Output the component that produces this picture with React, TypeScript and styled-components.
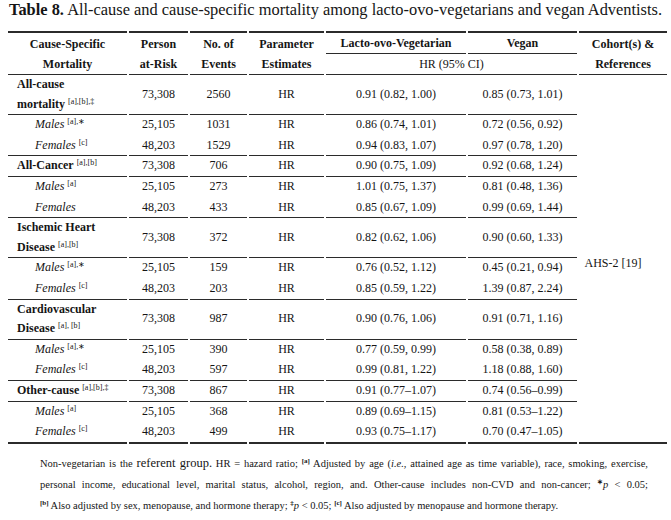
import React from 'react'
import styled, { createGlobalStyle } from 'styled-components'

type Line = 'none' | 'thin' | 'thick'

interface Row {
  label: React.ReactNode
  sup?: string
  atRisk: string
  events: string
  lacto: string
  vegan: string
}

interface Group extends Row {
  subs: Row[]
}

const groups: Group[] = [
  {
    label: <>All-cause<br />mortality</>,
    sup: '[a],[b],‡',
    atRisk: '73,308',
    events: '2560',
    lacto: '0.91 (0.82, 1.00)',
    vegan: '0.85 (0.73, 1.01)',
    subs: [
      { label: 'Males', sup: '[a],∗', atRisk: '25,105', events: '1031', lacto: '0.86 (0.74, 1.01)', vegan: '0.72 (0.56, 0.92)' },
      { label: 'Females', sup: '[c]', atRisk: '48,203', events: '1529', lacto: '0.94 (0.83, 1.07)', vegan: '0.97 (0.78, 1.20)' }
    ]
  },
  {
    label: 'All-Cancer',
    sup: '[a],[b]',
    atRisk: '73,308',
    events: '706',
    lacto: '0.90 (0.75, 1.09)',
    vegan: '0.92 (0.68, 1.24)',
    subs: [
      { label: 'Males', sup: '[a]', atRisk: '25,105', events: '273', lacto: '1.01 (0.75, 1.37)', vegan: '0.81 (0.48, 1.36)' },
      { label: 'Females', atRisk: '48,203', events: '433', lacto: '0.85 (0.67, 1.09)', vegan: '0.99 (0.69, 1.44)' }
    ]
  },
  {
    label: <>Ischemic Heart<br />Disease</>,
    sup: '[a],[b]',
    atRisk: '73,308',
    events: '372',
    lacto: '0.82 (0.62, 1.06)',
    vegan: '0.90 (0.60, 1.33)',
    subs: [
      { label: 'Males', sup: '[a],∗', atRisk: '25,105', events: '159', lacto: '0.76 (0.52, 1.12)', vegan: '0.45 (0.21, 0.94)' },
      { label: 'Females', sup: '[c]', atRisk: '48,203', events: '203', lacto: '0.85 (0.59, 1.22)', vegan: '1.39 (0.87, 2.24)' }
    ]
  },
  {
    label: <>Cardiovascular<br />Disease</>,
    sup: '[a], [b]',
    atRisk: '73,308',
    events: '987',
    lacto: '0.90 (0.76, 1.06)',
    vegan: '0.91 (0.71, 1.16)',
    subs: [
      { label: 'Males', sup: '[a],∗', atRisk: '25,105', events: '390', lacto: '0.77 (0.59, 0.99)', vegan: '0.58 (0.38, 0.89)' },
      { label: 'Females', sup: '[c]', atRisk: '48,203', events: '597', lacto: '0.99 (0.81, 1.22)', vegan: '1.18 (0.88, 1.60)' }
    ]
  },
  {
    label: 'Other-cause',
    sup: '[a],[b],‡',
    atRisk: '73,308',
    events: '867',
    lacto: '0.91 (0.77–1.07)',
    vegan: '0.74 (0.56–0.99)',
    subs: [
      { label: 'Males', sup: '[a]', atRisk: '25,105', events: '368', lacto: '0.89 (0.69–1.15)', vegan: '0.81 (0.53–1.22)' },
      { label: 'Females', sup: '[c]', atRisk: '48,203', events: '499', lacto: '0.93 (0.75–1.17)', vegan: '0.70 (0.47–1.05)' }
    ]
  }
]

const columns = [119, 59, 57, 75, 140, 109, 88]

const ink = '#151515'
const rule = '#2b2b2b'

const lineWidth: Record<Line, string> = {
  none: '1px solid transparent',
  thin: `1px solid ${rule}`,
  thick: `2px solid ${rule}`
}

const GlobalStyle = createGlobalStyle`
  body {
    margin: 0;
    background: #fff;
    color: ${ink};
    font-family: "Liberation Serif", "Times New Roman", serif;
  }
`

const Page = styled.div`
  padding: 0 2px 0 6px;
`

const Title = styled.h1`
  margin: 0 0 11px 3px;
  font-size: 16.4px;
  font-weight: normal;
  line-height: 20px;
  white-space: nowrap;

  b {
    font-weight: bold;
  }
`

const Table = styled.table`
  width: 663px;
  table-layout: fixed;
  border-collapse: separate;
  border-spacing: 2px 0;
  font-size: 12px;
`

const HeadCell = styled.th<{ $top?: boolean; $bold?: boolean }>`
  padding: 0 2px;
  line-height: 20px;
  text-align: center;
  vertical-align: middle;
  font-weight: ${({ $bold = true }) => ($bold ? 'bold' : 'normal')};
  border-top: ${({ $top }) => ($top ? lineWidth.thick : 'none')};
  border-bottom: ${lineWidth.thin};
  white-space: nowrap;
`

const Cell = styled.td<{ $line: Line }>`
  padding: 0 2px;
  line-height: 19.6px;
  text-align: center;
  vertical-align: middle;
  border-bottom: ${({ $line }) => lineWidth[$line]};
  white-space: nowrap;
`

const LabelCell = styled(Cell)<{ $sub?: boolean }>`
  text-align: left;
  padding-left: ${({ $sub }) => ($sub ? '27px' : '9px')};
  font-weight: ${({ $sub }) => ($sub ? 'normal' : 'bold')};
  font-style: ${({ $sub }) => ($sub ? 'italic' : 'normal')};
`

const CohortCell = styled.td`
  text-align: center;
  vertical-align: middle;
  padding: 10px 20px 0 0;
  border-bottom: ${lineWidth.thick};
  white-space: nowrap;
`

const Sup = styled.sup`
  font-size: 8px;
  font-weight: normal;
  font-style: normal;
  vertical-align: 4px;
  line-height: 0;
  margin-left: 3px;
`

const Notes = styled.div`
  width: 608px;
  margin: 9px 0 0 34px;
  font-size: 10.5px;
  line-height: 21px;
`

const NoteLine = styled.div<{ $full?: boolean }>`
  white-space: nowrap;
  text-align: ${({ $full }) => ($full ? 'justify' : 'left')};
  text-align-last: ${({ $full }) => ($full ? 'justify' : 'left')};
`

const Big = styled.span`
  font-size: 12.5px;
`

const NoteSup = styled.sup`
  font-size: 7px;
  font-weight: bold;
  vertical-align: 4px;
  line-height: 0;
`

const BodyRow = ({ row, sub, line, children }: { row: Row; sub?: boolean; line: Line; children?: React.ReactNode }) => (
  <tr>
    <LabelCell $line={line} $sub={sub}>
      {row.label}
      {row.sup && <Sup>{row.sup}</Sup>}
    </LabelCell>
    <Cell $line={line}>{row.atRisk}</Cell>
    <Cell $line={line}>{row.events}</Cell>
    <Cell $line={line}>HR</Cell>
    <Cell $line={line}>{row.lacto}</Cell>
    <Cell $line={line}>{row.vegan}</Cell>
    {children}
  </tr>
)

export default function App() {
  const rowCount = groups.reduce((n, g) => n + 1 + g.subs.length, 0)

  return (
    <Page>
      <GlobalStyle />
      <Title>
        <b>Table 8.</b> All-cause and cause-specific mortality among lacto-ovo-vegetarians and vegan Adventists.
      </Title>

      <Table>
        <colgroup>
          {columns.map((w, i) => (
            <col key={i} style={{ width: w }} />
          ))}
        </colgroup>
        <thead>
          <tr>
            <HeadCell $top rowSpan={2}>Cause-Specific<br />Mortality</HeadCell>
            <HeadCell $top rowSpan={2}>Person<br />at-Risk</HeadCell>
            <HeadCell $top rowSpan={2}>No. of<br />Events</HeadCell>
            <HeadCell $top rowSpan={2}>Parameter<br />Estimates</HeadCell>
            <HeadCell $top>Lacto-ovo-Vegetarian</HeadCell>
            <HeadCell $top>Vegan</HeadCell>
            <HeadCell $top rowSpan={2}>Cohort(s) &amp;<br />References</HeadCell>
          </tr>
          <tr>
            <HeadCell colSpan={2} $bold={false}>HR (95% CI)</HeadCell>
          </tr>
        </thead>
        <tbody>
          {groups.map((g, gi) => {
            const last = gi === groups.length - 1
            return (
              <React.Fragment key={gi}>
                <BodyRow row={g} line="thin">
                  {gi === 0 && <CohortCell rowSpan={rowCount}>AHS-2 [19]</CohortCell>}
                </BodyRow>
                {g.subs.map((s, si) => (
                  <BodyRow
                    key={si}
                    row={s}
                    sub
                    line={si === g.subs.length - 1 ? (last ? 'thick' : 'thin') : 'none'}
                  />
                ))}
              </React.Fragment>
            )
          })}
        </tbody>
      </Table>

      <Notes>
        <NoteLine $full>
          Non-vegetarian is the <Big>referent group.</Big> HR = hazard ratio; <NoteSup>[a]</NoteSup> Adjusted by age (
          <i>i.e.</i>, attained age as time variable), race, smoking, exercise,
        </NoteLine>
        <NoteLine $full>
          personal income, educational level, marital status, alcohol, region, and. Other-cause includes non-CVD and
          non-cancer; <NoteSup>∗</NoteSup><i>p</i> &lt; 0.05;
        </NoteLine>
        <NoteLine>
          <NoteSup>[b]</NoteSup> Also adjusted by sex, menopause, and hormone therapy; <NoteSup>‡</NoteSup>
          <i>p</i> &lt; 0.05; <NoteSup>[c]</NoteSup> Also adjusted by menopause and hormone therapy.
        </NoteLine>
      </Notes>
    </Page>
  )
}
